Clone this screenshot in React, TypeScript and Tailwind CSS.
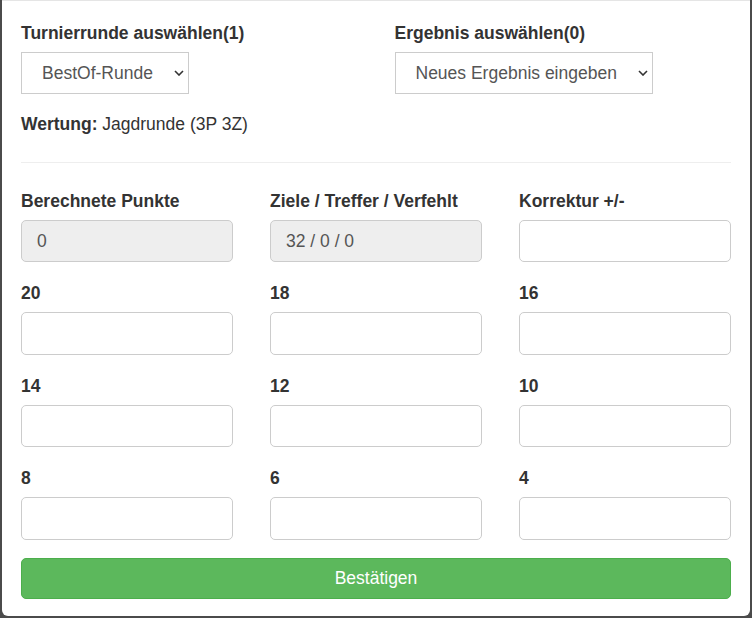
const fields: { label: string; value?: string; readOnly?: boolean }[] = [
  { label: 'Berechnete Punkte', value: '0', readOnly: true },
  { label: 'Ziele / Treffer / Verfehlt', value: '32 / 0 / 0', readOnly: true },
  { label: 'Korrektur +/-' },
  { label: '20' },
  { label: '18' },
  { label: '16' },
  { label: '14' },
  { label: '12' },
  { label: '10' },
  { label: '8' },
  { label: '6' },
  { label: '4' },
]

function Chevron(): JSX.Element {
  return (
    <svg width="10" height="6" viewBox="0 0 10 6" aria-hidden className="shrink-0">
      <path d="M1 1 L5 5 L9 1" fill="none" stroke="#333" strokeWidth="1.6" />
    </svg>
  )
}

function FakeSelect({ text }: { text: string }): JSX.Element {
  return (
    <div className="flex h-[41.5px] w-fit items-center gap-[21px] border border-[#ccc] bg-white pl-[20px] pr-[4px] text-[17.5px] text-[#555]">
      <span>{text}</span>
      <Chevron />
    </div>
  )
}

export default function App(): JSX.Element {
  return (
    <div className="flex h-[618px] w-[752px] bg-[#4b4b4b] [font-family:'Liberation_Sans',Arial,sans-serif]">
      <div className="ml-[2px] flex h-[616px] w-[748px] flex-col rounded-b-[6px] border-t border-[#e5e5e5] bg-white px-[19px] pt-[20px]">
        <div className="grid grid-cols-2 gap-x-[37px]">
          <div>
            <div className="text-[17.5px] leading-[25px] font-bold text-[#333]">Turnierrunde auswählen(1)</div>
            <div className="mt-[6px]">
              <FakeSelect text="BestOf-Runde" />
            </div>
          </div>
          <div>
            <div className="text-[17.5px] leading-[25px] font-bold text-[#333]">Ergebnis auswählen(0)</div>
            <div className="mt-[6px]">
              <FakeSelect text="Neues Ergebnis eingeben" />
            </div>
          </div>
        </div>

        <p className="mt-[18.5px] text-[17.5px] leading-[25px] text-[#333]">
          <b>Wertung:</b> Jagdrunde (3P 3Z)
        </p>

        <hr className="mt-[25px] border-t border-[#eee]" />

        <div className="mt-[25.5px] grid grid-cols-3 gap-x-[37px] gap-y-[18.75px]">
          {fields.map((f) => (
            <div key={f.label}>
              <label className="block text-[17.5px] leading-[25px] font-bold text-[#333]">{f.label}</label>
              <input
                type="text"
                readOnly={f.readOnly}
                defaultValue={f.value ?? ''}
                className={[
                  'mt-[6.25px] block h-[42.5px] w-full rounded-[5px] border border-[#ccc] px-[15px] text-[17.5px] text-[#555] outline-none',
                  f.readOnly ? 'bg-[#eee]' : 'bg-white',
                ].join(' ')}
              />
            </div>
          ))}
        </div>

        <button
          type="button"
          className="mt-[18px] h-[41.5px] w-full rounded-[5px] border border-[#4cae4c] bg-[#5cb85c] text-[17.5px] text-white"
        >
          Bestätigen
        </button>
      </div>
    </div>
  )
}
